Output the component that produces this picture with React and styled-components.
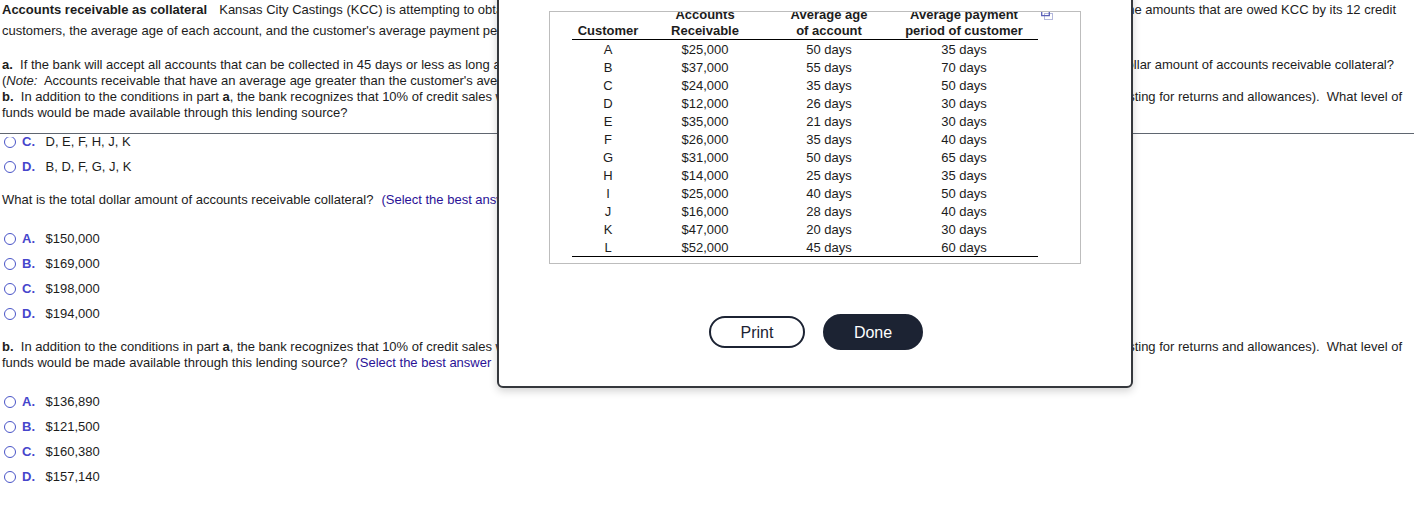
import React from 'react';
import styled, { createGlobalStyle } from 'styled-components';

const GlobalStyle = createGlobalStyle`
   html, body {
      margin: 0;
      padding: 0;
      background: #fff;
   }
`;

const Page = styled.div`
   position: relative;
   width: 1414px;
   height: 514px;
   overflow: hidden;
   font-family: 'Liberation Sans', Arial, sans-serif;
   font-size: 13px;
   color: #1c1c1c;
`;

const Header = styled.header`
   height: 134px;
   box-sizing: border-box;
   border-bottom: 1px solid #5f6670;
   padding-left: 2px;
`;

const Line = styled.div`
   display: flex;
   justify-content: space-between;
   white-space: nowrap;
   height: ${p => p.$height || 16}px;
   line-height: ${p => p.$height || 16}px;
   margin-top: ${p => p.$top || 0}px;
   padding-right: ${p => p.$end || 0}px;
`;

const Lead = styled.b`
   margin-right: 12px;
`;

const Scroller = styled.div`
   height: 377px;
   margin-top: 3px;
   overflow: hidden;
   padding-left: 2px;
`;

const Options = styled.div`
   display: flex;
   flex-direction: column;
   margin-top: ${p => p.$top || 0}px;
`;

const Option = styled.div`
   display: flex;
   align-items: center;
   height: 25px;
`;

const Radio = styled.span`
   width: 10px;
   height: 10px;
   border: 1.3px solid #4a55c8;
   border-radius: 50%;
   margin: 0 6px 0 2px;
   flex: none;
`;

const OptionLabel = styled.b`
   width: 23.5px;
   color: #4646cc;
`;

const Question = styled.div`
   margin-top: ${p => p.$top || 0}px;
   line-height: 16px;
   white-space: nowrap;
`;

const Hint = styled.span`
   color: #2a1296;
   margin-left: 8px;
`;

const Modal = styled.div`
   position: absolute;
   left: 497px;
   top: -10px;
   width: 636px;
   height: 398px;
   box-sizing: border-box;
   background: #fff;
   border: 2px solid #35383d;
   border-radius: 6px;
   box-shadow: 0 3px 8px rgba(0, 0, 0, 0.18);
   padding: 19px 50px 0;
   color: #1c1c1c;
`;

const TableBox = styled.div`
   position: relative;
   width: 532px;
   height: 253px;
   box-sizing: border-box;
   border: 1px solid #bdbdbd;
`;

const TableClip = styled.div`
   height: 100%;
   overflow: hidden;
   padding-left: 22px;
`;

const Table = styled.table`
   border-collapse: collapse;
   table-layout: fixed;
   width: 466px;
   margin-top: -5px;
   border-bottom: 1px solid #000;

   th:last-child,
   td:last-child {
      padding-right: 2px;
   }
`;

const Th = styled.th`
   width: ${p => p.$width}px;
   padding: 0;
   font-size: 13px;
   font-weight: bold;
   line-height: 16px;
   text-align: center;
   vertical-align: bottom;
   border-bottom: 1px solid #000;
`;

const Td = styled.td`
   padding: 1px 0 0;
   box-sizing: border-box;
   height: 18px;
   line-height: 17px;
   text-align: center;
`;

const CopyIcon = styled.svg`
   position: absolute;
   left: 491px;
   top: -1px;
   width: 15px;
   height: 9px;
`;

const Actions = styled.div`
   display: flex;
   align-items: center;
   justify-content: center;
   gap: 18px;
   margin-top: 50px;
   padding-left: 2px;
`;

const Button = styled.button`
   box-sizing: border-box;
   font-family: inherit;
   font-size: 16px;
   width: ${p => (p.$primary ? 100 : 96)}px;
   height: ${p => (p.$primary ? 36 : 32)}px;
   border-radius: 18px;
   border: 2px solid #1c2333;
   background: ${p => (p.$primary ? '#1c2333' : '#fff')};
   color: ${p => (p.$primary ? '#fff' : '#1c2333')};
   padding: 1px 0 0;
`;

const rows = [
   ['A', '$25,000', '50 days', '35 days'],
   ['B', '$37,000', '55 days', '70 days'],
   ['C', '$24,000', '35 days', '50 days'],
   ['D', '$12,000', '26 days', '30 days'],
   ['E', '$35,000', '21 days', '30 days'],
   ['F', '$26,000', '35 days', '40 days'],
   ['G', '$31,000', '50 days', '65 days'],
   ['H', '$14,000', '25 days', '35 days'],
   ['I', '$25,000', '40 days', '50 days'],
   ['J', '$16,000', '28 days', '40 days'],
   ['K', '$47,000', '20 days', '30 days'],
   ['L', '$52,000', '45 days', '60 days'],
];

const collateral = [
   ['A.', '$150,000'],
   ['B.', '$169,000'],
   ['C.', '$198,000'],
   ['D.', '$194,000'],
];

const lending = [
   ['A.', '$136,890'],
   ['B.', '$121,500'],
   ['C.', '$160,380'],
   ['D.', '$157,140'],
];

function OptionList({ items, top }) {
   return (
      <Options $top={top}>
         {items.map(([label, value]) => (
            <Option key={label}>
               <Radio />
               <OptionLabel>{label}</OptionLabel>
               {value}
            </Option>
         ))}
      </Options>
   );
}

function App() {
   return (
      <Page>
         <GlobalStyle />
         <Header>
            <Line $height={20} $end={18}>
               <span>
                  <Lead>Accounts receivable as collateral</Lead>
                  Kansas City Castings (KCC) is attempting to obtain the maximum loan
               </span>
               <span>the amounts that are owed KCC by its 12 credit</span>
            </Line>
            <Line $height={21}>
               <span>customers, the average age of each account, and the customer's average payment period</span>
            </Line>
            <Line $top={16} $end={20}>
               <span>
                  <b>a.</b>&nbsp; If the bank will accept all accounts that can be collected in 45 days or less as long as
               </span>
               <span>dollar amount of accounts receivable collateral?</span>
            </Line>
            <Line>
               <span>
                  (<i>Note:</i>&nbsp; Accounts receivable that have an average age greater than the customer's average
               </span>
            </Line>
            <Line $end={12}>
               <span>
                  <b>b.</b>&nbsp; In addition to the conditions in part <b>a</b>, the bank recognizes that 10% of credit sales will
               </span>
               <span>adjusting for returns and allowances).&nbsp; What level of</span>
            </Line>
            <Line>
               <span>funds would be made available through this lending source?</span>
            </Line>
         </Header>

         <Scroller>
            <Options $top={-8}>
               <Option>
                  <Radio />
                  <OptionLabel>C.</OptionLabel>
                  D, E, F, H, J, K
               </Option>
               <Option>
                  <Radio />
                  <OptionLabel>D.</OptionLabel>
                  B, D, F, G, J, K
               </Option>
            </Options>
            <Question $top={13}>
               What is the total dollar amount of accounts receivable collateral?
               <Hint>(Select the best answer.)</Hint>
            </Question>
            <OptionList items={collateral} top={18} />
            <Line $top={13} $end={12}>
               <span>
                  <b>b.</b>&nbsp; In addition to the conditions in part <b>a</b>, the bank recognizes that 10% of credit sales will
               </span>
               <span>adjusting for returns and allowances).&nbsp; What level of</span>
            </Line>
            <Question>
               funds would be made available through this lending source?
               <Hint>(Select the best answer</Hint>
            </Question>
            <OptionList items={lending} top={18} />
         </Scroller>

         <Modal>
            <TableBox>
               <TableClip>
                  <Table>
                     <thead>
                        <tr>
                           <Th $width={72}>Customer</Th>
                           <Th $width={122}>Accounts<br />Receivable</Th>
                           <Th $width={126}>Average age<br />of account</Th>
                           <Th $width={144}>Average payment<br />period of customer</Th>
                        </tr>
                     </thead>
                     <tbody>
                        {rows.map(row => (
                           <tr key={row[0]}>
                              {row.map((cell, i) => (
                                 <Td key={i}>{cell}</Td>
                              ))}
                           </tr>
                        ))}
                     </tbody>
                  </Table>
               </TableClip>
               <CopyIcon viewBox="0 0 15 9">
                  <rect x="3.5" y="2.5" width="8" height="6" fill="#fff" stroke="#b4b8dc" />
                  <path d="M0.7 1V4.6H8.3V1" fill="none" stroke="#5a60b8" strokeWidth="1.3" />
               </CopyIcon>
            </TableBox>
            <Actions>
               <Button>Print</Button>
               <Button $primary>Done</Button>
            </Actions>
         </Modal>
      </Page>
   );
}

export default App;
